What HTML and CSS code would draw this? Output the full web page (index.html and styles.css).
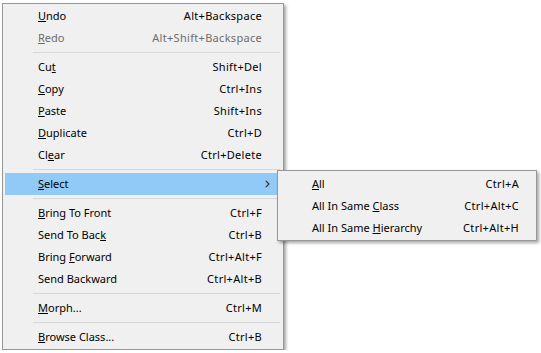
FILE: index.html
```html
<!DOCTYPE html>
<html>
<head>
<meta charset="utf-8">
<link rel="stylesheet" href="styles.css">
</head>
<body>
<div class="menu main">
  <div class="item"><span class="label"><u>U</u>ndo</span><span class="key">Alt+Backspace</span></div>
  <div class="item disabled"><span class="label"><u>R</u>edo</span><span class="key">Alt+Shift+Backspace</span></div>
  <div class="sep"></div>
  <div class="item"><span class="label">Cu<u>t</u></span><span class="key">Shift+Del</span></div>
  <div class="item"><span class="label"><u>C</u>opy</span><span class="key">Ctrl+Ins</span></div>
  <div class="item"><span class="label"><u>P</u>aste</span><span class="key">Shift+Ins</span></div>
  <div class="item"><span class="label"><u>D</u>uplicate</span><span class="key">Ctrl+D</span></div>
  <div class="item"><span class="label">Cl<u>e</u>ar</span><span class="key">Ctrl+Delete</span></div>
  <div class="sep"></div>
  <div class="item active">
    <span class="label"><u>S</u>elect</span>
    <svg class="arrow" width="5" height="8" viewBox="0 0 5 8"><path d="M0.8 0.8 L4 4 L0.8 7.2" fill="none" stroke="#333" stroke-width="1.2"/></svg>
    <div class="menu sub">
      <div class="item"><span class="label"><u>A</u>ll</span><span class="key">Ctrl+A</span></div>
      <div class="item"><span class="label">All In Same <u>C</u>lass</span><span class="key">Ctrl+Alt+C</span></div>
      <div class="item"><span class="label">All In Same <u>H</u>ierarchy</span><span class="key">Ctrl+Alt+H</span></div>
    </div>
  </div>
  <div class="sep"></div>
  <div class="item"><span class="label"><u>B</u>ring To Front</span><span class="key">Ctrl+F</span></div>
  <div class="item"><span class="label">Send To Bac<u>k</u></span><span class="key">Ctrl+B</span></div>
  <div class="item"><span class="label">Bring <u>F</u>orward</span><span class="key">Ctrl+Alt+F</span></div>
  <div class="item"><span class="label">Send Backward</span><span class="key">Ctrl+Alt+B</span></div>
  <div class="sep"></div>
  <div class="item"><span class="label"><u>M</u>orph...</span><span class="key">Ctrl+M</span></div>
  <div class="sep"></div>
  <div class="item"><span class="label"><u>B</u>rowse Class...</span><span class="key">Ctrl+B</span></div>
</div>
</body>
</html>
```
FILE: styles.css
```css
html, body {
  margin: 0;
  background: #ffffff;
}
body {
  padding: 3px 0 0 2px;
  font-family: "Noto Sans", "DejaVu Sans", sans-serif;
  font-size: 11px;
  color: #000;
}
.menu {
  background: #f0f0f0;
  border: 1px solid #979797;
  box-shadow: 2px 2px 3px rgba(0, 0, 0, 0.35);
  padding: 1px 2px;
  box-sizing: border-box;
}
.main {
  width: 282px;
}
.item {
  position: relative;
  height: 22px;
  box-sizing: border-box;
  display: flex;
  align-items: center;
  padding: 0 19px 2px 33px;
}
.item .label {
  flex: 1;
  white-space: nowrap;
}
.item .key {
  white-space: nowrap;
  letter-spacing: 0.3px;
}
.item u {
  text-decoration-thickness: 1px;
  text-underline-offset: 1px;
}
.disabled {
  color: #6d6d6d;
}
.active {
  background: #91c9f7;
}
.arrow {
  margin-right: -8px;
  margin-top: 1px;
}
.sep {
  height: 1px;
  margin: 3px 1px 3px 28px;
  background: #d7d7d7;
}
.sub {
  position: absolute;
  left: 272px;
  top: -3px;
  width: 260px;
  padding: 2px 2px 1px;
  color: #000;
}
.sub .item {
  padding: 0 15px 2px 32px;
}
```
